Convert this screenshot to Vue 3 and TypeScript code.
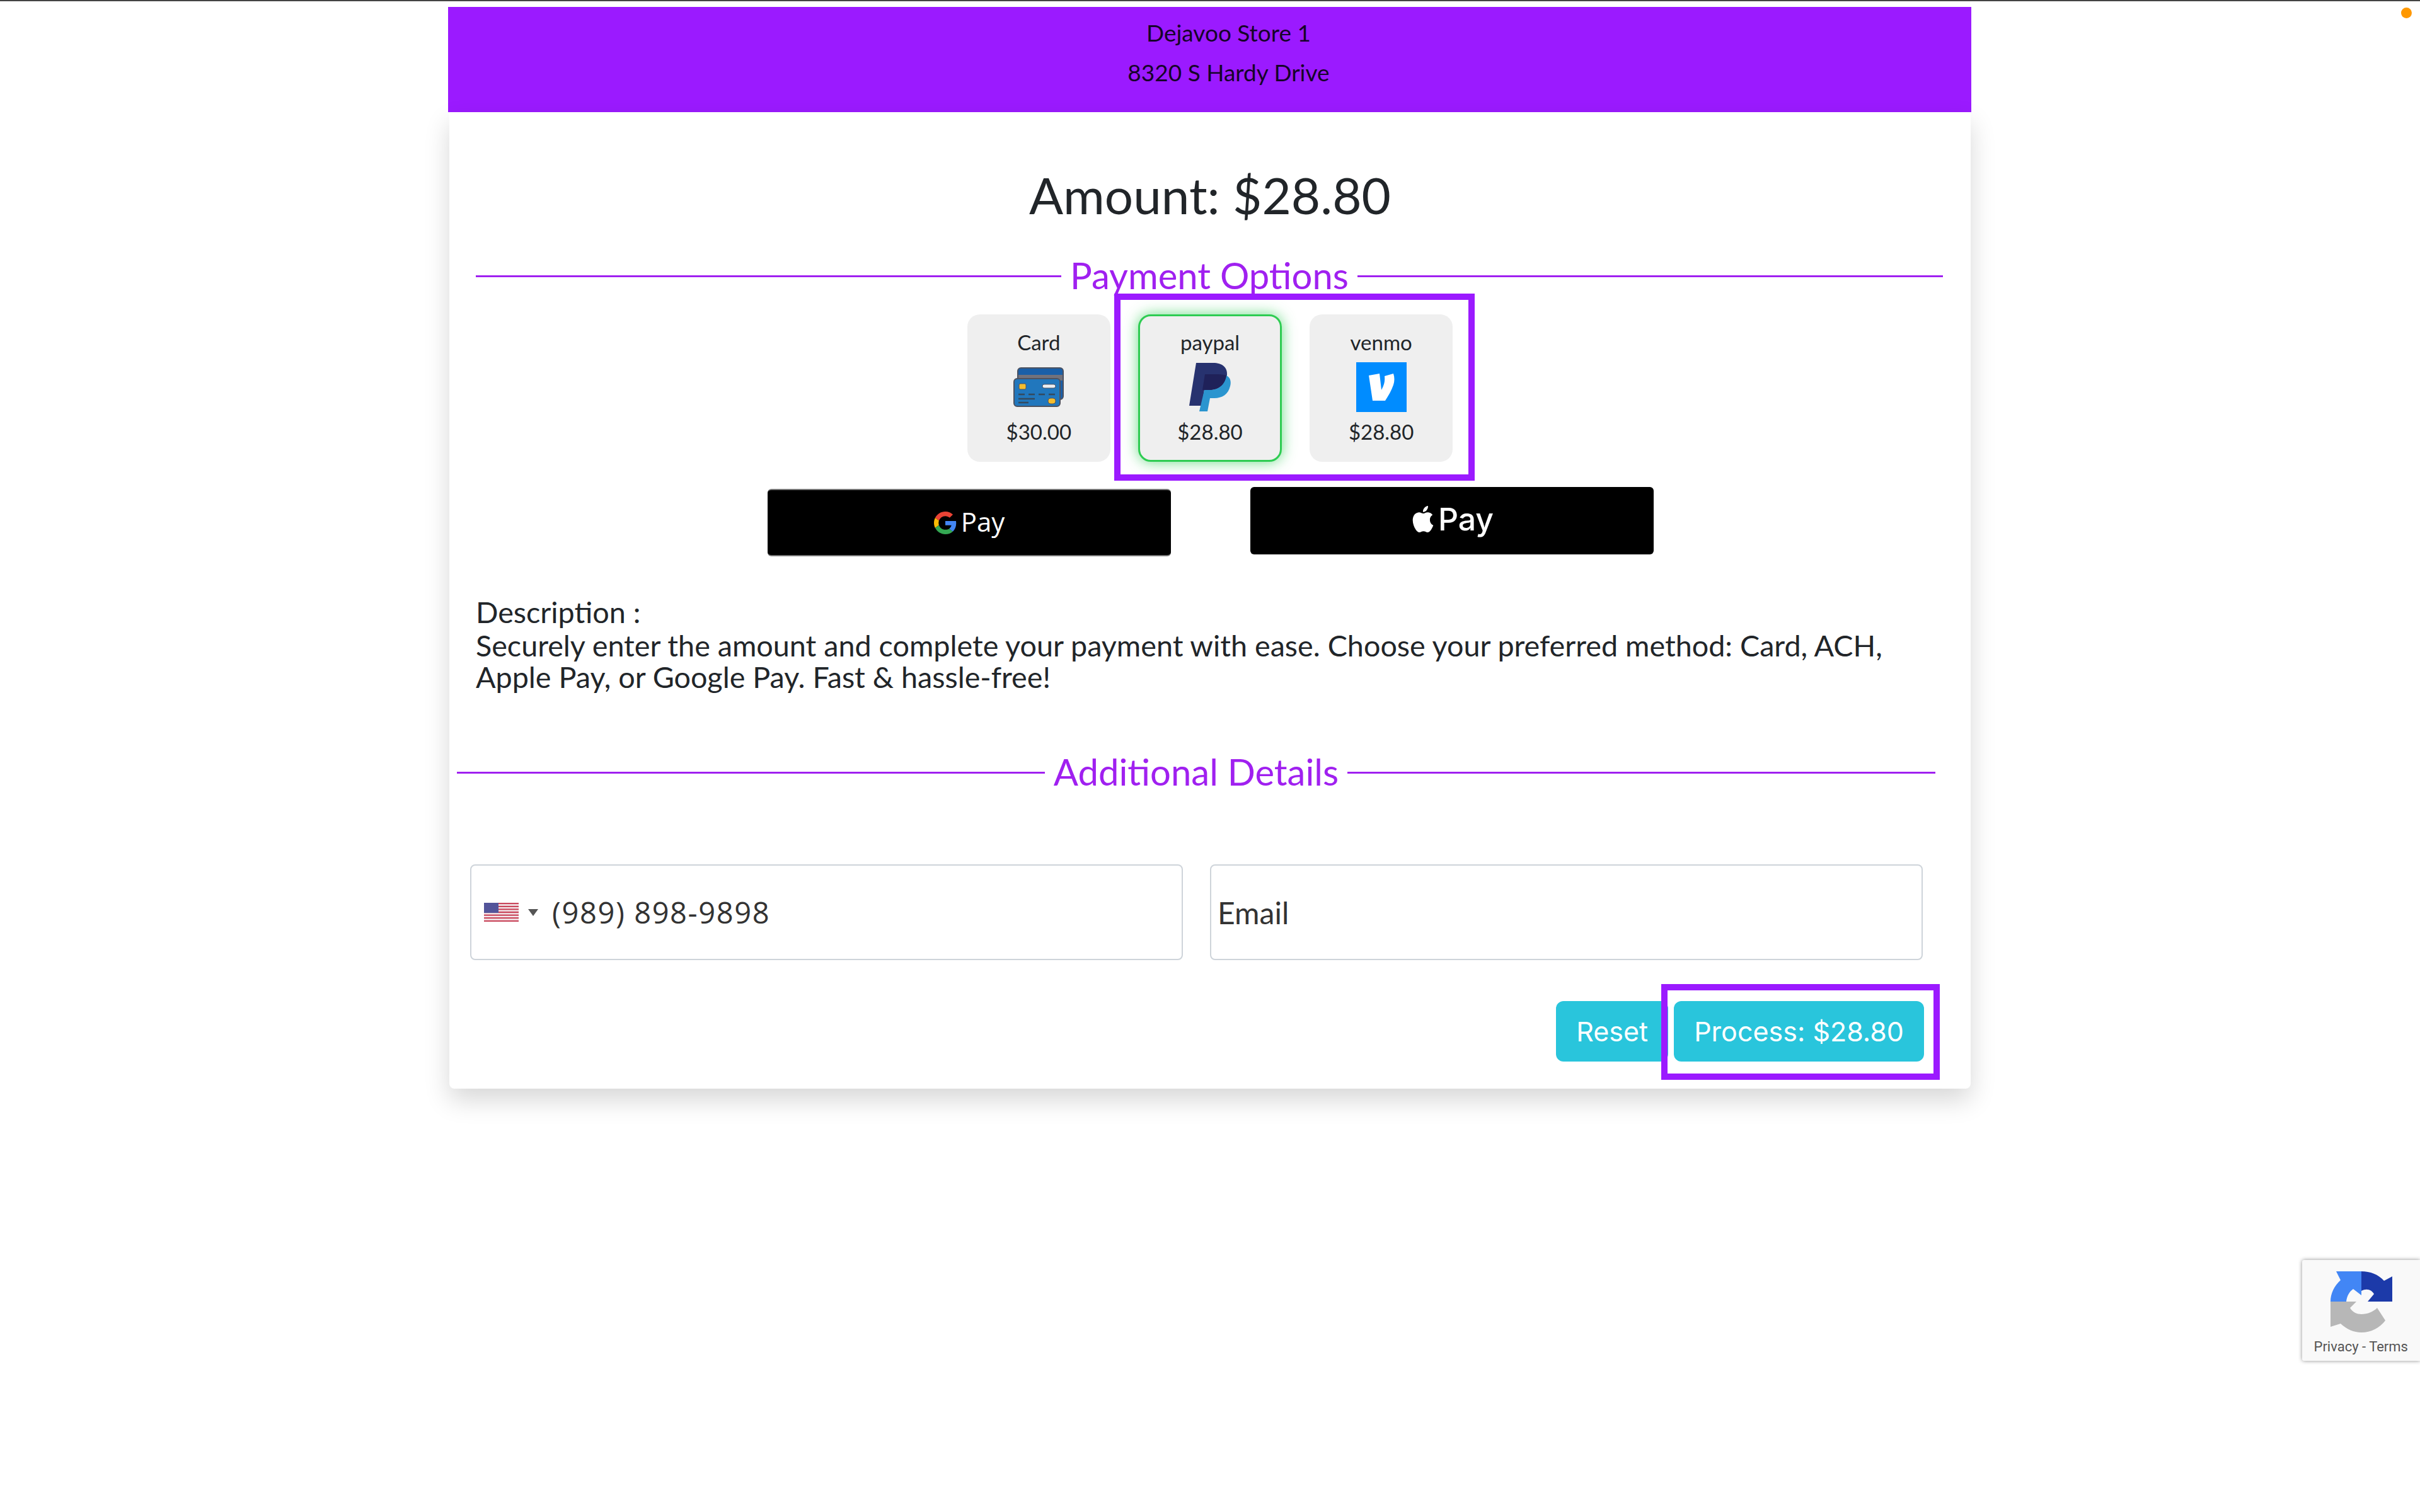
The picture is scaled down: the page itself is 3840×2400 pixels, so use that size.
<script setup lang="ts">
interface Tile {
  name: string;
  price: string;
  icon: 'card' | 'paypal' | 'venmo';
  selected?: boolean;
}

const tiles: Tile[] = [
  { name: 'Card', price: '$30.00', icon: 'card' },
  { name: 'paypal', price: '$28.80', icon: 'paypal', selected: true },
  { name: 'venmo', price: '$28.80', icon: 'venmo' },
];
</script>

<template>
  <div class="page">
    <header class="store">
      <div>Dejavoo Store 1</div>
      <div>8320 S Hardy Drive</div>
    </header>

    <main class="card">
      <h1 class="amount">Amount: $28.80</h1>

      <div class="section-title payment-title">
        <span>Payment Options</span>
      </div>

      <div class="tiles">
        <div v-for="tile in tiles" :key="tile.name" :class="['tile', { selected: tile.selected }]">
          <div class="tile-name">{{ tile.name }}</div>
          <div class="tile-icon">
            <svg v-if="tile.icon === 'card'" width="80" height="63" viewBox="0 0 80 63">
              <rect x="7" y="1" width="72" height="50" rx="5" fill="#1a5fa8" stroke="#4d5260" stroke-width="2" />
              <rect x="8" y="12" width="70" height="9" fill="#72727c" />
              <rect x="1" y="18" width="73" height="44" rx="5" fill="#2177bd" stroke="#4d5260" stroke-width="2" />
              <rect x="9" y="26" width="11" height="9" rx="2" fill="#f5bd2e" stroke="#4d5260" />
              <rect x="46" y="27" width="21" height="6" rx="3" fill="#eceff2" stroke="#4d5260" />
              <path d="M8 43H66" stroke="#34495e" stroke-width="2.5" stroke-dasharray="10 6" />
              <path d="M8 50H34M8 56H24" stroke="#34495e" stroke-width="2.5" />
              <rect x="55" y="49" width="12" height="9" rx="4" fill="#f5bd2e" stroke="#4d5260" />
            </svg>
            <svg v-else-if="tile.icon === 'paypal'" width="66" height="77" viewBox="0 0 66 77">
              <path d="M11 0H38C52 0 61 7 60 19C58 34 47 43 32 43H24L20 68H0Z" fill="#27326f" />
              <path d="M59 20C65 23 67 29 65 37C62 50 52 56 40 56H33L29 77H16L24 43H32C47 43 57 34 59 20Z" fill="#2b95cf" />
              <path d="M25 18H45C51 18 56 19 59 20C57 34 47 43 32 43H21Z" fill="#1f2159" />
            </svg>
            <svg v-else width="80" height="79" viewBox="0 0 80 79">
              <rect width="80" height="79" fill="#008cff" />
              <path d="M20 21L37 18L40 44C44 37 46 30 45 22L59 18C61 24 61 30 59 36C56 45 51 53 46 61H26Z" fill="#fff" />
            </svg>
          </div>
          <div class="tile-price">{{ tile.price }}</div>
        </div>
        <div class="tiles-mark"></div>
      </div>

      <div class="wallets">
        <button class="wallet gpay" type="button">
          <svg width="36" height="36" viewBox="0 0 48 48">
            <path fill="#EA4335" d="M24 9.5c3.54 0 6.71 1.22 9.21 3.6l6.85-6.85C35.9 2.38 30.47 0 24 0 14.62 0 6.51 5.38 2.56 13.22l7.98 6.19C12.43 13.72 17.74 9.5 24 9.5z" />
            <path fill="#4285F4" d="M46.98 24.55c0-1.57-.15-3.09-.38-4.55H24v9.02h12.94c-.58 2.96-2.26 5.48-4.78 7.18l7.73 6c4.51-4.18 7.09-10.36 7.09-17.65z" />
            <path fill="#FBBC05" d="M10.53 28.59c-.48-1.45-.76-2.99-.76-4.59s.27-3.14.76-4.59l-7.98-6.19C.92 16.46 0 20.12 0 24c0 3.88.92 7.54 2.56 10.78l7.97-6.19z" />
            <path fill="#34A853" d="M24 48c6.48 0 11.93-2.13 15.89-5.81l-7.73-6c-2.15 1.45-4.92 2.3-8.16 2.3-6.26 0-11.57-4.22-13.47-9.91l-7.98 6.19C6.51 42.62 14.62 48 24 48z" />
          </svg>
          <span>Pay</span>
        </button>
        <button class="wallet apay" type="button">
          <svg width="40" height="42" viewBox="0 0 24 24" preserveAspectRatio="none">
            <path fill="#fff" d="M12.152 6.896c-.948 0-2.415-1.078-3.96-1.04-2.04.027-3.91 1.183-4.961 3.014-2.117 3.675-.546 9.103 1.519 12.09 1.013 1.454 2.208 3.09 3.792 3.039 1.52-.065 2.09-.987 3.935-.987 1.831 0 2.35.987 3.96.948 1.637-.026 2.676-1.48 3.676-2.948 1.156-1.688 1.636-3.325 1.662-3.415-.039-.013-3.182-1.221-3.22-4.857-.026-3.04 2.48-4.494 2.597-4.559-1.429-2.09-3.623-2.324-4.39-2.376-2-.156-3.675 1.09-4.61 1.09zM15.53 3.83c.843-1.012 1.4-2.427 1.245-3.83-1.207.052-2.662.805-3.532 1.818-.78.896-1.454 2.338-1.273 3.714 1.338.104 2.715-.688 3.559-1.701" />
          </svg>
          <span>Pay</span>
        </button>
      </div>

      <div class="description">
        <div class="description-label">Description :</div>
        <p>Securely enter the amount and complete your payment with ease. Choose your preferred method: Card, ACH, Apple Pay, or Google Pay. Fast &amp; hassle-free!</p>
      </div>

      <div class="section-title details-title">
        <span>Additional Details</span>
      </div>

      <div class="fields">
        <div class="field phone">
          <svg class="flag" width="55" height="30" viewBox="0 0 55 30">
            <rect width="55" height="30" fill="#f4eef0" />
            <path d="M0 1.2H55M0 5.8H55M0 10.4H55M0 15H55M0 19.6H55M0 24.2H55M0 28.8H55" stroke="#c9475c" stroke-width="2.3" />
            <rect width="23" height="16" fill="#53549a" />
          </svg>
          <span class="caret"></span>
          <span class="phone-number">(989) 898-9898</span>
        </div>
        <div class="field email">Email</div>
      </div>

      <div class="actions">
        <button class="btn reset" type="button">Reset</button>
        <div class="process-wrap">
          <button class="btn process" type="button">Process: $28.80</button>
          <div class="process-mark"></div>
        </div>
      </div>
    </main>

    <span class="status-dot"></span>

    <div class="recaptcha">
      <svg width="98" height="98" viewBox="0 0 98 98">
        <path d="M0 49C0 36 6 24 16 15L9 1H49V39L36 29C30 33 26 40 25 49Z" fill="#4286f5" />
        <path d="M49 1C63 1 76 6 85 16L98 9V49H59L69 37C66 31 58 27 49 32Z" fill="#1c3aa9" />
        <path d="M0 49H41L31 59C35 66 42 69 49 69C59 69 68 65 74 59L87 79C78 91 64 98 49 98C37 98 26 93 16 84L0 89Z" fill="#b7b7b7" />
      </svg>
      <div class="recaptcha-links">Privacy - Terms</div>
    </div>
  </div>
</template>

<style>
html,
body {
  margin: 0;
  min-height: 100vh;
}

body {
  box-sizing: border-box;
  border-top: 2px solid #444;
}
</style>

<style scoped>
.page {
  width: 2417px;
  margin: 9px 0 0 711px;
  font-family: Lato, "Open Sans", sans-serif;
  color: #212529;
}

.store {
  height: 167px;
  box-sizing: border-box;
  padding: 9px 0 0 60px;
  background: #9b1aff;
  color: #16042a;
  font-size: 37px;
  line-height: 63px;
  text-align: center;
}

.card {
  margin: 0 1px 0 2px;
  padding: 81px 0 43px;
  background: #fff;
  border-radius: 0 0 8px 8px;
  box-shadow: 0 18px 40px rgba(0, 0, 0, 0.16);
}

.amount {
  margin: 0;
  font-size: 80px;
  font-weight: 400;
  line-height: 100px;
  text-align: center;
}

.section-title {
  display: flex;
  align-items: center;
  gap: 14px;
  height: 70px;
  color: #a020f0;
  font-size: 58px;
}

.section-title span {
  margin-top: -3px;
}

.section-title::before,
.section-title::after {
  content: "";
  flex: 1;
  height: 3px;
  background: #a020f0;
}

.payment-title {
  margin: 44px 44px 0 42px;
}

.details-title {
  margin: 92px 56px 0 12px;
}

.tiles {
  position: relative;
  display: flex;
  justify-content: center;
  gap: 44px;
  width: 771px;
  margin: 26px auto 0;
}

.tile {
  box-sizing: border-box;
  width: 228px;
  height: 234px;
  padding-top: 24px;
  border-radius: 20px;
  background: #efefef;
  font-size: 33px;
  line-height: 40px;
  text-align: center;
}

.tile.selected {
  border: 3px solid #2ecc52;
  padding-top: 21px;
  box-shadow: 0 0 22px rgba(46, 204, 82, 0.7);
}

.tile-icon {
  display: flex;
  align-items: center;
  justify-content: center;
  height: 78px;
  margin-top: 12px;
}

.tile-price {
  margin-top: 12px;
}

.tiles-mark {
  position: absolute;
  top: -33px;
  left: 233px;
  width: 572px;
  height: 297px;
  box-sizing: border-box;
  border: 10px solid #9b1aff;
}

.wallets {
  display: flex;
  gap: 126px;
  margin: 40px 0 0 505px;
}

.wallet {
  display: flex;
  align-items: center;
  justify-content: center;
  width: 640px;
  height: 107px;
  padding: 0;
  border: none;
  border-radius: 6px;
  background: #000;
  color: #fff;
}

.wallet span {
  margin-top: -5px;
}

.gpay {
  margin-top: 3px;
  gap: 7px;
  border-top: 2px solid #777;
  border-bottom: 2px solid #777;
  font-family: "Open Sans", sans-serif;
  font-size: 42px;
}

.apay {
  gap: 4px;
  font-family: Inter, sans-serif;
  font-size: 50px;
  font-weight: 500;
}

.apay svg {
  margin-top: -6px;
}

.description {
  width: 2290px;
  margin: 63px 0 0 42px;
  font-size: 46.7px;
  line-height: 50px;
}

.description-label {
  margin-bottom: 3px;
}

.description p {
  margin: 0;
}

.fields {
  display: grid;
  grid-template-columns: 1131px 1131px;
  gap: 43px;
  margin: 111px 0 0 33px;
}

.field {
  display: flex;
  align-items: center;
  box-sizing: border-box;
  height: 152px;
  border: 2px solid #ced4da;
  border-radius: 8px;
  font-size: 46px;
}

.phone {
  padding-left: 20px;
  font-family: "Open Sans", sans-serif;
  color: #333;
}

.phone-number {
  font-size: 47px;
  letter-spacing: 1.6px;
}

.caret {
  width: 0;
  height: 0;
  margin: 0 22px 0 15px;
  border-top: 11px solid #555;
  border-left: 8px solid transparent;
  border-right: 8px solid transparent;
}

.email {
  padding-left: 10px;
  color: #333;
  font-size: 48px;
}

.actions {
  display: flex;
  justify-content: flex-end;
  gap: 9px;
  margin: 65px 74px 0 0;
}

.btn {
  height: 96px;
  padding: 0 32px;
  border: none;
  border-radius: 12px;
  background: #29c5dc;
  color: #fff;
  font-family: Inter, sans-serif;
  font-size: 43px;
}

.process-wrap {
  position: relative;
}

.process-mark {
  position: absolute;
  inset: -27px -25px -29px -20px;
  box-sizing: border-box;
  border: 10px solid #9b1aff;
}

.status-dot {
  position: absolute;
  top: 12px;
  left: 3810px;
  width: 17px;
  height: 17px;
  border-radius: 50%;
  background: #ff9800;
}

.recaptcha {
  position: absolute;
  top: 2000px;
  right: 0;
  display: flex;
  flex-direction: column;
  align-items: center;
  width: 187px;
  height: 160px;
  box-sizing: border-box;
  padding-top: 17px;
  background: #f9f9f9;
  border-radius: 3px 0 0 3px;
  box-shadow: 0 0 6px rgba(0, 0, 0, 0.45);
  font-family: Roboto, sans-serif;
}

.recaptcha-links {
  width: 100%;
  margin-top: 10px;
  padding-left: 19px;
  color: #555;
  font-size: 22px;
  white-space: nowrap;
  transform: translateX(9px);
}
</style>
